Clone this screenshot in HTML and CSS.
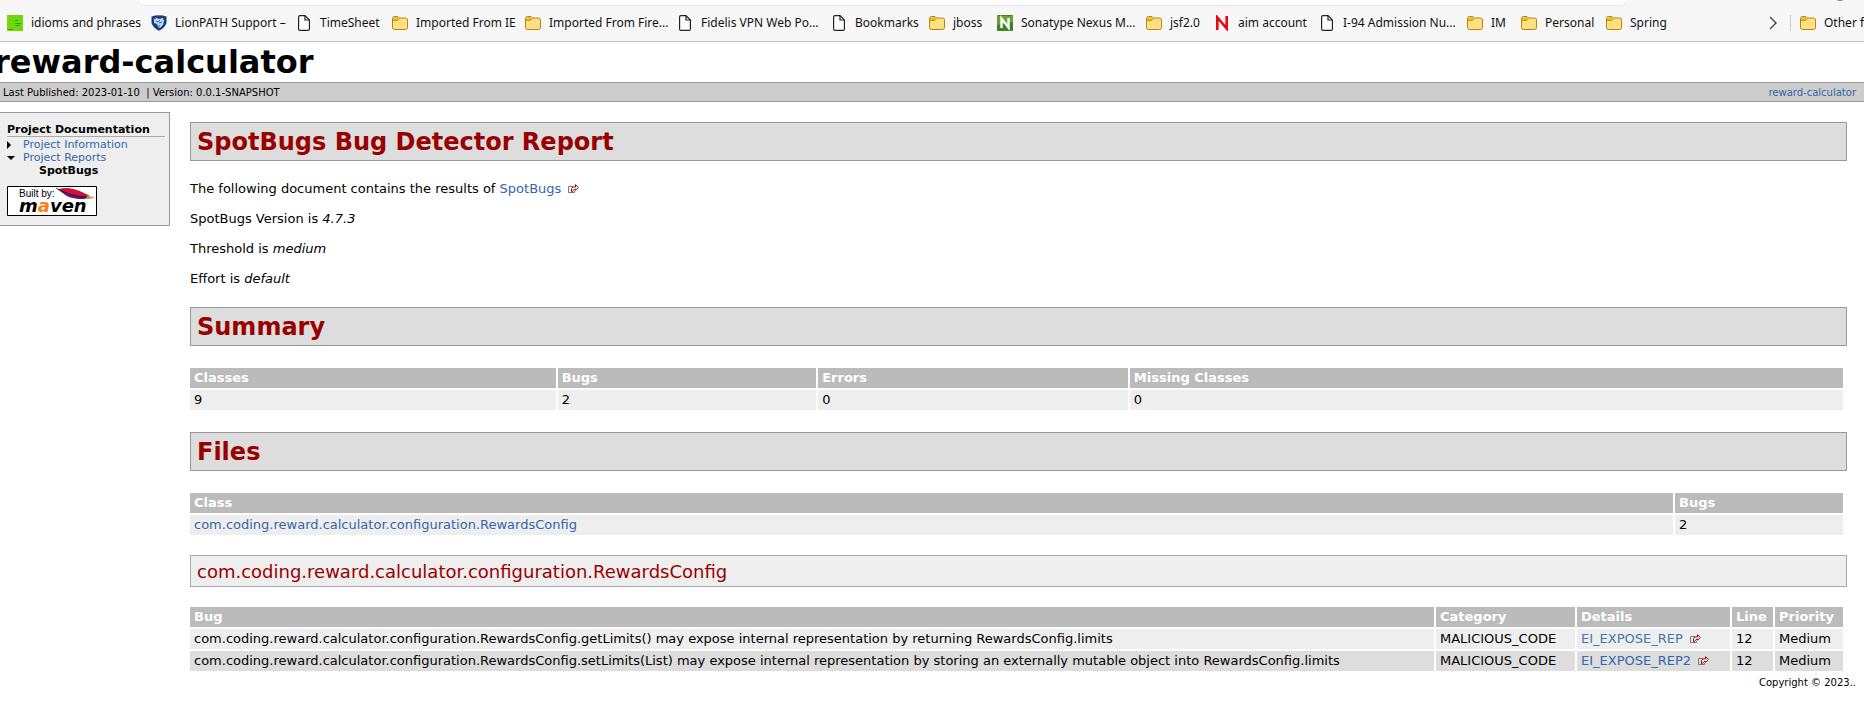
FILE: index.html
```
<!DOCTYPE html>
<html lang="en">
<head>
<meta charset="utf-8">
<title>reward-calculator – SpotBugs Bug Detector Report</title>
<link rel="stylesheet" href="styles.css">
</head>
<body>
<svg class="defs" aria-hidden="true">
  <symbol id="folder" viewBox="0 0 16 16">
    <path d="M.5 3.5a2 2 0 0 1 2-2H6L7.500 3h6a2 2 0 0 1 2 2v7.500a2 2 0 0 1-2 2h-11a2 2 0 0 1-2-2z" fill="#ffdf83" stroke="#b5860c"/>
    <path d="M1 5V3.500A1.500 1.500 0 0 1 2.500 2H6l1 1-1.500 2z" fill="#f0bf3c"/>
    <path d="M1 5.300h4.500L7.200 3.500" fill="none" stroke="#b5860c"/>
  </symbol>
  <symbol id="page" viewBox="0 0 16 16">
    <path d="M4 .600h5L13.400 5v8.900a1.500 1.500 0 0 1-1.500 1.500H4a1.500 1.500 0 0 1-1.400-1.500V2A1.400 1.400 0 0 1 4 .600z" fill="#fff" stroke="#222" stroke-width="1.200"/>
    <path d="M9 .800V5h4.200" fill="none" stroke="#222" stroke-width="1.200"/>
  </symbol>
  <symbol id="external" viewBox="0 0 11 9">
    <path d="M5 2.500H.500v6h6V7" fill="none" stroke="#777"/>
    <path d="M3.500 7.500V4.500l1.500-1.500h2.500V.700L10.400 3.500 7.500 6.300V5.200L6 5.500 4.500 7.500z" fill="#fff" stroke="#a00000"/>
  </symbol>
</svg>

<header class="browser">
  <div class="address"></div>
  <div class="avatar"></div>
  <nav class="bookmarks" aria-label="Favorites">
    <a href="#"><svg class="icon" viewBox="0 0 16 16"><path d="M0 0h16v16H0z" fill="#6fd80c"/><path d="M1 1v12l3 2H1" fill="none" stroke="#a4c81c"/><path d="M8 5.500h3M8 8.500h6M8 10.500h5M1 14.500h5" stroke="#419c16"/></svg>idioms and phrases</a>
    <a href="#"><svg class="icon" viewBox="0 0 16 16"><path d="M.500 1.500Q8-1 15.500 1.500V8Q14 13 8 15.800 2 13 .500 8z" fill="#1c3f7c"/><path d="M3 4l3-1 2 1 4-1 1 3-1 4-3 3-2-1-1-3-3-1z" fill="#b8d6f3"/><path d="M5 6l2 1 2-2M8 8l3-1M7 11l2 0" fill="none" stroke="#3c69a6"/></svg>LionPATH Support –</a>
    <a href="#"><svg class="icon"><use href="#page"/></svg>TimeSheet</a>
    <a href="#"><svg class="icon"><use href="#folder"/></svg>Imported From IE</a>
    <a href="#"><svg class="icon"><use href="#folder"/></svg>Imported From Fire...</a>
    <a href="#"><svg class="icon"><use href="#page"/></svg>Fidelis VPN Web Po...</a>
    <a href="#"><svg class="icon"><use href="#page"/></svg>Bookmarks</a>
    <a href="#"><svg class="icon"><use href="#folder"/></svg>jboss</a>
    <a href="#"><svg class="icon" viewBox="0 0 16 16"><rect width="16" height="16" rx="1" fill="#3f8424"/><path d="M0 1h16v6L0 10z" fill="#68a13c"/><path d="M4.500 13V3.500l7 9V3" fill="none" stroke="#fff" stroke-width="2.400"/></svg>Sonatype Nexus M...</a>
    <a href="#"><svg class="icon"><use href="#folder"/></svg>jsf2.0</a>
    <a href="#"><svg class="icon" viewBox="0 0 16 16"><path d="M3.300 15V2.500l9.400 11V1" fill="none" stroke="#e50914" stroke-width="2.600"/></svg>aim account</a>
    <a href="#"><svg class="icon"><use href="#page"/></svg>I-94 Admission Nu...</a>
    <a href="#"><svg class="icon"><use href="#folder"/></svg>IM</a>
    <a href="#"><svg class="icon"><use href="#folder"/></svg>Personal</a>
    <a href="#"><svg class="icon"><use href="#folder"/></svg>Spring</a>
    <button class="more" type="button" aria-label="More favorites"><svg width="8" height="14" viewBox="0 0 8 14"><path d="M1 1l6 6-6 6" fill="none" stroke="#444" stroke-width="1.400"/></svg></button>
    <a class="other" href="#"><svg class="icon"><use href="#folder"/></svg>Other fa</a>
  </nav>
</header>

<div class="banner">reward-calculator</div>
<div class="breadcrumbs">
  <span>Last Published: 2023-01-10 &nbsp;| Version: 0.0.1-SNAPSHOT</span>
  <a href="#">reward-calculator</a>
</div>

<div class="columns">
  <aside class="sidebar">
    <h5>Project Documentation</h5>
    <ul>
      <li class="collapsed"><a href="#">Project Information</a></li>
      <li class="expanded"><a href="#">Project Reports</a></li>
      <li class="current">SpotBugs</li>
    </ul>
    <a class="maven" href="#" aria-label="Built by Maven"><svg width="90" height="30" viewBox="0 0 90 30">
      <path d="M.500.500h89v29H.500z" fill="#fff" stroke="#000"/>
      <text class="built" x="12" y="11">Built by:</text>
      <text class="word" x="12" y="26">m<tspan fill="#ff7e18">a</tspan>ven</text>
      <path d="M49 2l6 4" stroke="#444"/>
      <path d="M52 3c6-2 14-1 23 3l8 4-5 3c-11 0-20-3-26-10z" fill="#d0103c"/>
      <path d="M53 4c8 6 17 7 28 7l-5 2c-10 0-18-2-23-9z" fill="#5c1a70"/>
      <path d="M51 3q14 8 29 8" fill="none" stroke="#240b38"/>
      <path d="M80 10l8 1-5 2h-4z" fill="#c2a63e"/>
    </svg></a>
  </aside>

  <main>
    <h2>SpotBugs Bug Detector Report</h2>
    <p>The following document contains the results of <a href="#">SpotBugs<svg class="external"><use href="#external"/></svg></a></p>
    <p>SpotBugs Version is <i>4.7.3</i></p>
    <p>Threshold is <i>medium</i></p>
    <p>Effort is <i>default</i></p>

    <h2>Summary</h2>
    <table class="summary">
      <colgroup><col><col><col><col></colgroup>
      <tr><th>Classes</th><th>Bugs</th><th>Errors</th><th>Missing Classes</th></tr>
      <tr><td>9</td><td>2</td><td>0</td><td>0</td></tr>
    </table>

    <h2>Files</h2>
    <table class="files">
      <colgroup><col><col></colgroup>
      <tr><th>Class</th><th>Bugs</th></tr>
      <tr><td><a href="#rewards-config">com.coding.reward.calculator.configuration.RewardsConfig</a></td><td>2</td></tr>
    </table>

    <h3 id="rewards-config">com.coding.reward.calculator.configuration.RewardsConfig</h3>
    <table class="bugs">
      <colgroup><col><col><col><col><col></colgroup>
      <tr><th>Bug</th><th>Category</th><th>Details</th><th>Line</th><th>Priority</th></tr>
      <tr><td>com.coding.reward.calculator.configuration.RewardsConfig.getLimits() may expose internal representation by returning RewardsConfig.limits</td><td>MALICIOUS_CODE</td><td><a class="hover" href="#">EI_EXPOSE_REP<svg class="external"><use href="#external"/></svg></a></td><td>12</td><td>Medium</td></tr>
      <tr class="alt"><td>com.coding.reward.calculator.configuration.RewardsConfig.setLimits(List) may expose internal representation by storing an externally mutable object into RewardsConfig.limits</td><td>MALICIOUS_CODE</td><td><a href="#">EI_EXPOSE_REP2<svg class="external"><use href="#external"/></svg></a></td><td>12</td><td>Medium</td></tr>
    </table>
  </main>
</div>
<footer>Copyright © 2023..</footer>
</body>
</html>
```
FILE: styles.css
```
body {
  margin: 0;
  background: #fff;
  color: #000;
  font: 13px/16px Verdana, "DejaVu Sans", sans-serif;
  overflow-x: hidden;
}

a {
  color: #36a;
  text-decoration: none;
}

.defs {
  position: absolute;
  width: 0;
  height: 0;
}

/* Browser chrome */
.browser {
  position: relative;
  background: #f7f7f7;
  border-bottom: 1px solid #bdbdbd;
  overflow: hidden;
}

.address {
  height: 5px;
  margin: 0 238px 0 139px;
  background: #fff;
  border-radius: 0 0 12px 12px;
  box-shadow: 0 1px 2px #e4e4e4;
}

.avatar {
  position: absolute;
  top: -11px;
  right: 18px;
  width: 12px;
  height: 12px;
  border-radius: 50%;
  background: #777;
}

.bookmarks {
  display: grid;
  grid-template-columns: 144px 145px 96px 133px 152px 154px 98px 68px 149px 68px 105px 148px 54px 85px 1fr 38px 73px;
  align-items: center;
  height: 36px;
  padding-left: 7px;
  font: 12px/16px "Segoe UI", "Noto Sans", sans-serif;
}

.bookmarks a {
  display: flex;
  align-items: center;
  gap: 8px;
  color: #111;
  white-space: nowrap;
}

.icon {
  flex: none;
  width: 16px;
  height: 16px;
}

.more {
  display: flex;
  align-items: center;
  height: 16px;
  padding: 0 0 0 16px;
  border: 0;
  border-right: 1px solid #ccc;
  background: none;
}

.bookmarks .other {
  padding-left: 9px;
  overflow: hidden;
}

/* Site header */
.banner {
  margin-left: -6px;
  font-size: 32px;
  font-weight: bold;
  line-height: 40px;
}

.breadcrumbs {
  display: flex;
  justify-content: space-between;
  padding: 3px 8px 1px 3px;
  background: #ccc;
  border: solid #999;
  border-width: 1px 0;
  font-size: 10px;
  line-height: 14px;
}

.columns {
  display: flex;
  align-items: flex-start;
}

/* Navigation */
.sidebar {
  box-sizing: border-box;
  flex: none;
  width: 170px;
  margin: 10px 20px 0 0;
  padding: 10px 4px 9px 7px;
  background: #eee;
  border: 1px solid #999;
  border-left: 0;
  font-size: 11px;
  line-height: 13px;
}

.sidebar h5 {
  margin: 0 0 1px;
  border-bottom: 1px solid #aaa;
  font-size: 11px;
  white-space: nowrap;
}

.sidebar ul {
  margin: 0 0 9px;
  padding: 0;
  list-style: none;
}

.sidebar li {
  padding-left: 16px;
}

.sidebar li.current {
  padding-left: 32px;
  font-weight: bold;
}

.collapsed,
.expanded {
  display: flex;
  align-items: center;
}

.sidebar .collapsed,
.sidebar .expanded {
  padding: 0;
}

.collapsed::before,
.expanded::before {
  content: "";
  border: solid transparent;
}

.collapsed::before {
  margin-right: 12px;
  border-width: 4px 0 4px 4px;
  border-left-color: #000;
}

.expanded::before {
  margin-right: 8px;
  border-width: 4px 4px 0;
  border-top-color: #000;
}

.maven,
.maven svg {
  display: block;
}

.built {
  font: 10px "Liberation Sans", sans-serif;
}

.word {
  font: italic bold 18px "DejaVu Sans", sans-serif;
}

/* Report */
main {
  flex: 1;
  min-width: 0;
  padding: 20px 17px 0 0;
}

h2,
h3 {
  margin: 0;
  padding: 5px 6px 4px;
  color: #900;
}

h2 {
  background: #ddd;
  border: 1px solid #999;
  font-size: 24px;
  line-height: 28px;
}

h3 {
  background: #eee;
  border: 1px solid #aaa;
  font-size: 18px;
  font-weight: normal;
  line-height: 21px;
}

p {
  margin: 14px 0;
}

h2 + p {
  margin-top: 20px;
}

p + h2 {
  margin-top: 20px;
}

.external {
  width: 11px;
  height: 9px;
  margin-left: 7px;
}

table {
  table-layout: fixed;
  width: 100%;
  margin: 20px -2px;
  border-spacing: 2px;
}

table.files {
  margin-bottom: 18px;
}

table.bugs {
  margin: 18px -2px 0;
}

th,
td {
  padding: 2px 4px;
  background: #eee;
  text-align: left;
  white-space: nowrap;
}

th {
  background: #bbb;
  color: #fff;
}

.alt td {
  background: #ddd;
}

.hover {
  color: #47a;
}

.summary col:nth-child(1) { width: 22.2%; }
.summary col:nth-child(2) { width: 15.7%; }
.summary col:nth-child(3) { width: 18.8%; }

.files col:nth-child(2) { width: 168px; }

.bugs col:nth-child(2) { width: 139px; }
.bugs col:nth-child(3) { width: 153px; }
.bugs col:nth-child(4) { width: 41px; }
.bugs col:nth-child(5) { width: 68px; }

footer {
  padding: 3px 8px 0;
  font-size: 10px;
  line-height: 14px;
  text-align: right;
}
```
